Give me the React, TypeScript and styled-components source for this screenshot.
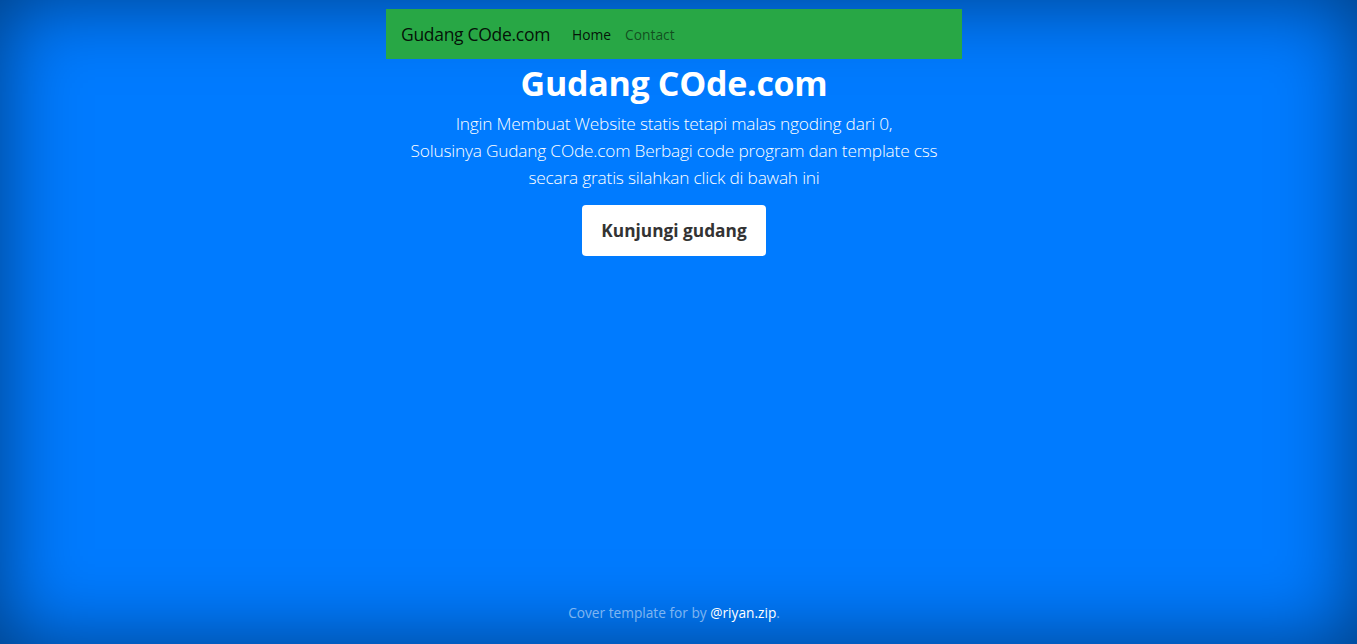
import React from "react";
import styled, { createGlobalStyle } from "styled-components";

const GlobalStyle = createGlobalStyle`
	html, body {
		margin: 0;
		height: 100%;
	}
	body {
		background-color: #007bff;
		color: #fff;
		font-family: "Open Sans", "Noto Sans", sans-serif;
		box-shadow: inset 0 0 5rem rgba(0, 0, 0, 0.5);
	}
	#root {
		height: 100%;
		padding-right: 9px;
		box-sizing: border-box;
	}
`;

const Cover = styled.div`
	display: flex;
	flex-direction: column;
	width: 576px;
	height: 100%;
	margin: 0 auto;
	padding-top: 9px;
	box-sizing: border-box;
`;

const Navbar = styled.nav`
	display: flex;
	align-items: center;
	height: 50px;
	padding: 0 15px;
	background-color: #28a745;
	gap: 22px;
`;

const Brand = styled.a`
	font-size: 17.5px;
	color: rgba(0, 0, 0, 0.9);
	text-decoration: none;
	letter-spacing: -0.3px;
`;

const NavList = styled.ul`
	display: flex;
	list-style: none;
	margin: 0;
	padding: 0;
	gap: 14px;
`;

const NavLink = styled.a<{ $active?: boolean }>`
	font-size: 13.8px;
	color: ${(p) => (p.$active ? "rgba(0, 0, 0, 0.9)" : "rgba(0, 0, 0, 0.55)")};
	text-decoration: none;
`;

const Inner = styled.main`
	flex: 1;
	display: flex;
	flex-direction: column;
	align-items: center;
	text-align: center;
`;

const Title = styled.h1`
	margin: 4px 0 0;
	font-size: 34px;
	font-weight: 700;
	line-height: 40px;
	letter-spacing: -0.3px;
`;

const Lead = styled.p`
	margin: 7px 0 0;
	font-size: 17.3px;
	font-weight: 300;
	line-height: 27px;
	letter-spacing: -0.2px;
`;

const Button = styled.a`
	display: inline-block;
	margin-top: 14px;
	padding: 12px 19px;
	background: #fff;
	color: #333;
	border-radius: 4px;
	font-size: 17.3px;
	font-weight: 700;
	line-height: 27px;
	text-decoration: none;
`;

const Footer = styled.footer`
	padding-bottom: 22px;
	text-align: center;
	font-size: 13.7px;
	color: rgba(255, 255, 255, 0.5);
`;

const FooterLink = styled.a`
	color: #fff;
	text-decoration: none;
`;

export default function App() {
	return (
		<>
			<GlobalStyle />
			<Cover>
				<header>
					<Navbar>
						<Brand href="#">Gudang COde.com</Brand>
						<NavList>
							<li>
								<NavLink $active href="#">
									Home
								</NavLink>
							</li>
							<li>
								<NavLink href="#">Contact</NavLink>
							</li>
						</NavList>
					</Navbar>
				</header>
				<Inner>
					<Title>Gudang COde.com</Title>
					<Lead>
						Ingin Membuat Website statis tetapi malas ngoding dari 0,
						<br />
						Solusinya Gudang COde.com Berbagi code program dan template css
						<br />
						secara gratis silahkan click di bawah ini
					</Lead>
					<Button href="#">Kunjungi gudang</Button>
				</Inner>
				<Footer>
					Cover template for by <FooterLink href="#">@riyan.zip</FooterLink>.
				</Footer>
			</Cover>
		</>
	);
}
